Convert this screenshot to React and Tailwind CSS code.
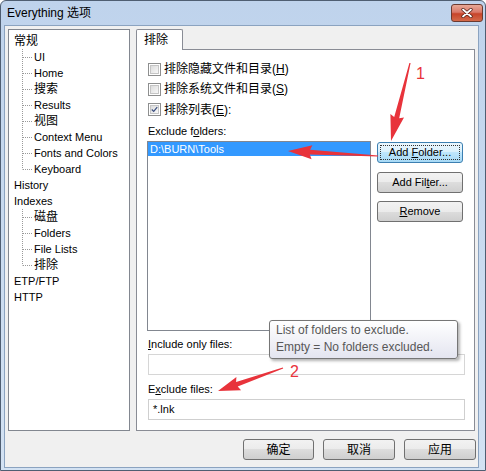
import React from 'react'

const tree = [
  { t: '常规', children: ['UI', 'Home', '搜索', 'Results', '视图', 'Context Menu', 'Fonts and Colors', 'Keyboard'] },
  { t: 'History' },
  { t: 'Indexes', children: ['磁盘', 'Folders', 'File Lists', '排除'] },
  { t: 'ETP/FTP' },
  { t: 'HTTP' },
]

const isCjk = (s) => /[\u4e00-\u9fff]/.test(s)

// tapered annotation arrow, thin at the tail and wide at the head
function arrow(x1, y1, x2, y2, head = 20, hw = 7, bw = 2.6, tw = 0.6) {
  const len = Math.hypot(x2 - x1, y2 - y1)
  const ux = (x2 - x1) / len
  const uy = (y2 - y1) / len
  const px = -uy
  const py = ux
  const bx = x2 - ux * head
  const by = y2 - uy * head
  const pts = [
    [x1 + px * tw, y1 + py * tw],
    [bx + px * bw, by + py * bw],
    [bx + px * hw - ux * 2, by + py * hw - uy * 2],
    [x2, y2],
    [bx - px * hw - ux * 2, by - py * hw - uy * 2],
    [bx - px * bw, by - py * bw],
    [x1 - px * tw, y1 - py * tw],
  ]
  return pts.map((p) => p.map((v) => v.toFixed(1)).join(',')).join(' ')
}

const TreeRow = ({ label, child, last }) => (
  <div className="flex items-center h-[16px]">
    {child && (
      <svg width="19" height="16" className="shrink-0">
        <line x1="8.5" y1="0" x2="8.5" y2={last ? 8.5 : 16} stroke="#9a9a9a" strokeDasharray="1 1" />
        <line x1="9" y1="8.5" x2="19" y2="8.5" stroke="#9a9a9a" strokeDasharray="1 1" />
      </svg>
    )}
    <span className={`${child ? 'ml-px' : ''} ${isCjk(label) ? 'text-[12px]' : 'text-[11px]'} leading-[16px] whitespace-nowrap`}>
      {label}
    </span>
  </div>
)

const Checkbox = ({ checked }) => (
  <div className="w-[13px] h-[13px] border border-[#8e8f8f] bg-white p-px shrink-0">
    <div className="w-full h-full bg-gradient-to-br from-[#dcdcdc] to-[#f8f8f8] border border-[#c5c5c5] flex items-center justify-center">
      {checked && (
        <svg width="9" height="9" viewBox="0 0 9 9">
          <path d="M1 4.5 L3.5 7 L8 1.5" fill="none" stroke="#3b4f81" strokeWidth="1.6" />
        </svg>
      )}
    </div>
  </div>
)

const Button = ({ children, focused, className = '' }) => (
  <div
    className={`h-[21px] rounded-[3px] border flex items-center justify-center p-[2px] ${
      focused
        ? 'border-[#3c7fb1] bg-[linear-gradient(#eaf6fd_0%,#d9f0fc_50%,#bee6fd_50%,#a7d9f5_100%)]'
        : 'border-[#707070] bg-[linear-gradient(#f2f2f2_0%,#ebebeb_50%,#dddddd_50%,#cfcfcf_100%)]'
    } ${className}`}
  >
    <div className={`w-full h-full flex items-center justify-center ${focused ? 'border border-dotted border-[#333]' : ''}`}>
      <span className="whitespace-pre">{children}</span>
    </div>
  </div>
)

export default function App() {
  return (
    <div className="relative w-[486px] h-[471px] flex flex-col bg-gradient-to-b from-[#bfd3ec] to-[#d3e2f3] border border-[#4f5e72] rounded-t-[6px] overflow-hidden font-['Liberation_Sans','Noto_Sans_CJK_SC',sans-serif] text-black">
      {/* title bar */}
      <div className="h-[24px] flex items-start shrink-0">
        <div className="pl-[6px] h-[24px] flex items-center text-[12px]">
          Everything 选项
        </div>
        <div className="ml-auto mr-[2px] mt-[3px] w-[32px] h-[18px] rounded-[3px] border border-[#6b3a30] bg-[linear-gradient(#e8a896_0%,#d9796a_45%,#c7442a_55%,#d46a4a_100%)] flex items-center justify-center">
          <svg width="12" height="10" viewBox="0 0 12 10">
            <path d="M2 1.5 L10 8.5 M10 1.5 L2 8.5" stroke="#4a1a10" strokeWidth="3.2" strokeLinecap="round" />
            <path d="M2 1.5 L10 8.5 M10 1.5 L2 8.5" stroke="#ffffff" strokeWidth="1.8" strokeLinecap="round" />
          </svg>
        </div>
      </div>

      {/* body */}
      <div className="flex-1 ml-[3px] mr-[6px] mb-[2px] bg-[#f0f0f0] border border-[#8ba3c0] flex flex-col pl-[3px] pt-[3px]">
        <div className="flex gap-[6px]">
          {/* tree */}
          <div className="w-[122px] h-[402px] border border-[#828790] bg-white pl-[5px] pt-[3px]">
            {tree.map((n) => (
              <div key={n.t}>
                <TreeRow label={n.t} />
                {n.children?.map((c, i) => (
                  <TreeRow key={c} label={c} child last={i === n.children.length - 1} />
                ))}
              </div>
            ))}
          </div>

          {/* tab control */}
          <div className="w-[339px] h-[402px] flex flex-col">
            <div className="relative z-10 -mb-px w-[47px] h-[21px] border border-b-0 border-[#898c95] bg-white rounded-t-[2px] flex items-center pl-[7px] text-[12px]">
              排除
            </div>
            <div className="flex-1 border border-[#898c95] bg-white pl-[10px] pt-[9px]">
              <div className="flex items-center h-[20px] ml-px gap-[3px]">
                <Checkbox />
                <span className="text-[12px]">排除隐藏文件和目录(<u>H</u>)</span>
              </div>
              <div className="flex items-center h-[20px] ml-px gap-[3px]">
                <Checkbox />
                <span className="text-[12px]">排除系统文件和目录(<u>S</u>)</span>
              </div>
              <div className="flex items-center h-[21px] ml-px gap-[3px]">
                <Checkbox checked />
                <span className="text-[12px]">排除列表(<u>E</u>):</span>
              </div>
              <div className="mt-[3px] h-[16px] ml-px flex items-center text-[11px]">
                <span>Exclude f<u>o</u>lders:</span>
              </div>
              <div className="mt-[2px] flex gap-[6px]">
                <div className="w-[224px] h-[190px] border border-[#828790] bg-white">
                  <div className="h-[14px] bg-[#3399ff] text-white text-[11px] leading-[14px] pl-[2px]">D:\BURN\Tools</div>
                </div>
                <div className="flex flex-col w-[86px] pt-px text-[11px]">
                  <Button focused>
                    Add <u>F</u>older...
                  </Button>
                  <Button className="mt-[9px]">
                    Add Fil<u>t</u>er...
                  </Button>
                  <Button className="mt-[8px]">
                    <u>R</u>emove
                  </Button>
                </div>
              </div>
              <div className="mt-[5px] h-[16px] ml-px flex items-center text-[11px]">
                <span><u>I</u>nclude only files:</span>
              </div>
              <div className="mt-[2px] ml-px w-[317px] h-[21px] border border-[#d6d6d6] bg-white" />
              <div className="mt-[6px] h-[16px] ml-px flex items-center text-[11px]">
                <span>E<u>x</u>clude files:</span>
              </div>
              <div className="mt-[2px] ml-px w-[317px] h-[21px] border border-[#cfcfcf] bg-white flex items-center pl-[4px] text-[11px]">
                *.lnk
              </div>
            </div>
          </div>
        </div>

        {/* dialog buttons */}
        <div className="mt-[8px] flex justify-end gap-[9px] pr-[2px] text-[12px]">
          <Button className="w-[71px]">确定</Button>
          <Button className="w-[72px]">取消</Button>
          <Button className="w-[72px]">应用</Button>
        </div>
      </div>

      {/* tooltip */}
      <div className="absolute left-[268px] top-[319px] w-[189px] h-[39px] rounded-[3px] border border-[#767676] bg-gradient-to-b from-white to-[#e4e5f0] shadow-[2px_2px_3px_rgba(0,0,0,0.3)] pl-[6px] pt-[1px] text-[12px] leading-[17px] text-[#575757] font-['Liberation_Sans',sans-serif]">
        <div>List of folders to exclude.</div>
        <div>Empty = No folders excluded.</div>
      </div>

      {/* annotations */}
      <svg className="absolute left-0 top-0 pointer-events-none" width="486" height="471">
        <polygon points={arrow(409, 62, 390, 140, 24, 7, 2.6)} fill="#e8333b" />
        <polygon points={arrow(377, 155, 287, 150, 22, 7, 2.4)} fill="#e8333b" />
        <polygon points={arrow(282, 367, 217, 390, 20, 7, 2.4)} fill="#e8333b" />
        <text x="415" y="78" fill="#e8333b" fontSize="16" fontFamily="Liberation Sans, sans-serif">1</text>
        <text x="289" y="376" fill="#e8333b" fontSize="16" fontFamily="Liberation Sans, sans-serif">2</text>
      </svg>
    </div>
  )
}
